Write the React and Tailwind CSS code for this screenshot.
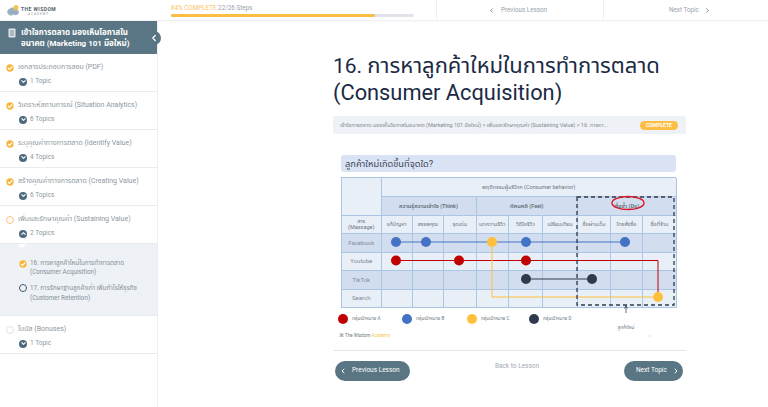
import { ChevronLeft, ChevronRight, ChevronDown, ChevronUp } from 'lucide-react';

const FONT = "font-['Roboto','Noto_Sans','Noto_Sans_Thai',sans-serif]";

const LESSONS = [
  { label: 'เอกสารประกอบการสอน (PDF)', topics: '1 Topic', status: 'done' },
  { label: 'วิเคราะห์สถานการณ์ (Situation Analytics)', topics: '6 Topics', status: 'done' },
  { label: 'ระบุคุณค่าทางการตลาด (Identify Value)', topics: '4 Topics', status: 'done' },
  { label: 'สร้างคุณค่าทางการตลาด (Creating Value)', topics: '6 Topics', status: 'done' },
  { label: 'เพิ่มและรักษาคุณค่า (Sustaining Value)', topics: '2 Topics', status: 'open', expanded: true },
  { label: 'โบนัส (Bonuses)', topics: '1 Topic', status: 'todo' }
];

const COLUMNS = ['แก้ปัญหา', 'สรรพคุณ', 'จุดเด่น', 'บทความรีวิว', 'วิดีโอรีวิว', 'เปรียบเทียบ', 'ซื้อผ่านเว็บ', 'โทรสั่งซื้อ', 'ซื้อที่ร้าน'];
const CHANNELS = ['Facebook', 'Youtube', 'TikTok', 'Search'];
const LEGEND = [
  { name: 'กลุ่มเป้าหมาย A', color: 'bg-[#c00000]', width: 'w-[64px]' },
  { name: 'กลุ่มเป้าหมาย B', color: 'bg-[#4472c4]', width: 'w-[65px]' },
  { name: 'กลุ่มเป้าหมาย C', color: 'bg-[#ffc03c]', width: 'w-[62px]' },
  { name: 'กลุ่มเป้าหมาย D', color: 'bg-[#2f3b4d]', width: 'w-[60px]' }
];

function CheckDot({ size = 8 }) {
  return (
    <svg width={size} height={size} viewBox="0 0 12 12" className="shrink-0">
      <circle cx="6" cy="6" r="5.5" fill="#f9b53a" />
      <path d="M3 6l2.2 2.2L9.4 3.8" fill="none" stroke="#fff" strokeWidth="1.8" />
    </svg>
  );
}

function StatusDot({ status }) {
  if (status === 'done') return <CheckDot />;
  if (status === 'open') return <span className="w-[8px] h-[8px] shrink-0 rounded-full border border-[#f9c777]" />;
  return <span className="w-[8px] h-[8px] shrink-0 rounded-full border border-[#dfe3e8]" />;
}

function LessonRow({ lesson }) {
  return (
    <div className="h-[38px] border-b border-[#e8ebef] pl-[6px] pt-[8px]">
      <div className="flex items-center gap-[4px] h-[11px]">
        <StatusDot status={lesson.status} />
        <span className="text-[7px] text-[#8d979f] whitespace-nowrap">{lesson.label}</span>
      </div>
      <div className="flex items-center gap-[3px] pl-[13px] mt-[3px] h-[11px]">
        <span className="w-[8px] h-[8px] rounded-full bg-[#4c6a7c] flex items-center justify-center">
          {lesson.expanded
            ? <ChevronUp size={7} color="#fff" strokeWidth={3.5} />
            : <ChevronDown size={7} color="#fff" strokeWidth={3.5} />}
        </span>
        <span className="text-[6.5px] text-[#8b98a1]">{lesson.topics}</span>
      </div>
    </div>
  );
}

function Sidebar() {
  return (
    <aside className="relative w-[158px] shrink-0 border-r border-[#eceef1] min-h-[386px]">
      <div className="relative h-[33px] bg-[#5a7583] flex items-center pl-[8px] gap-[5px]">
        <svg width="8" height="10" viewBox="0 0 8 10" className="shrink-0 -mt-[9px]">
          <rect x="0.5" y="0.5" width="7" height="9" rx="1" fill="#dfe5e8" />
          <path d="M2 3h4M2 5h4M2 7h4" stroke="#5a7583" strokeWidth="0.8" />
        </svg>
        <p className="text-[8px] leading-[11px] font-bold text-white">
          เข้าใจการตลาด มองเห็นโอกาสใน<br />อนาคต (Marketing 101 มือใหม่)
        </p>
        <span className="absolute right-[-4px] top-[10px] w-[14px] h-[14px] rounded-full bg-[#5a7583] flex items-center justify-center">
          <ChevronLeft size={10} color="#fff" strokeWidth={3} />
        </span>
      </div>
      {LESSONS.map(lesson => (
        <div key={lesson.label}>
          <LessonRow lesson={lesson} />
          {lesson.expanded && (
            <div className="relative h-[72px] bg-[#eef1f5] border-b border-[#e8ebef] pl-[19px] pt-[15px]">
              <span className="absolute left-[18px] top-0 border-x-[4px] border-x-transparent border-t-[4px] border-t-white" />
              <div className="flex gap-[3px]">
                <span className="mt-[1px]"><CheckDot size={8} /></span>
                <p className="text-[6.3px] leading-[9px] text-[#848f98]">16. การหาลูกค้าใหม่ในการทำการตลาด<br />(Consumer Acquisition)</p>
              </div>
              <div className="flex gap-[3px] mt-[6px]">
                <span className="mt-[1px] w-[8px] h-[8px] shrink-0 rounded-full border-[1.2px] border-[#3f5c70]" />
                <p className="text-[6.3px] leading-[10px] text-[#848f98]">17. การรักษาฐานลูกค้าเก่า เพิ่มกำไรให้ธุรกิจ<br />(Customer Retention)</p>
              </div>
            </div>
          )}
        </div>
      ))}
    </aside>
  );
}

function Logo() {
  return (
    <div className="w-[171px] shrink-0 flex items-center pl-[7px] gap-[1px] pt-[1px]">
      <svg width="13" height="13" viewBox="0 0 13 13">
        <path d="M0.5 9c-.8-2 .4-4 2-4 1-1.8 4-2 5.5-.6 2.2-.3 4.4 2.4 3.7 4.6-.8 2.2-3.5 2.8-5 1.6-1.6 1.8-5.3 1-6.2-1.6z" fill="#9fb2c2" />
        <circle cx="9" cy="3.5" r="2.5" fill="#f6c452" />
        <path d="M2.5 8h3M7 8.5h3" stroke="#7f94a6" strokeWidth="0.5" />
      </svg>
      <div className="leading-none pt-[1px]">
        <p className="text-[5px] leading-[6px] font-bold tracking-[0.45px] text-[#54616c] whitespace-nowrap">THE WISDOM</p>
        <p className="text-[3px] leading-[4px] tracking-[1px] text-[#8a949c] pl-[7px]">ACADEMY</p>
      </div>
    </div>
  );
}

function TopBar() {
  return (
    <header className="h-[21px] flex border-b border-[#eef0f3] shadow-[0_1px_2px_rgba(0,0,0,0.03)]">
      <Logo />
      <div className="w-[243px] shrink-0 pt-[4px]">
        <p className="text-[6.3px] leading-[8px] text-[#99a3ab] whitespace-nowrap">
          <span className="text-[#fbc35f]">84% COMPLETE</span> 22/26 Steps
        </p>
        <div className="mt-[1.5px] h-[3px] rounded-full bg-[#e1e4ea]">
          <div className="h-full w-[84%] rounded-full bg-[#fdbe44]" />
        </div>
      </div>
      <div className="w-[22px] shrink-0" />
      <button className="w-[167px] border-l border-[#eef0f3] flex items-center pl-[51px] pt-[1px] gap-[6px] text-[6.3px] text-[#98a3ab]">
        <ChevronLeft size={7} color="#52656f" strokeWidth={2.5} /> Previous Lesson
      </button>
      <button className="flex-1 border-l border-[#eef0f3] flex items-center pl-[65px] pt-[1px] gap-[5px] text-[6.3px] text-[#98a3ab]">
        Next Topic <ChevronRight size={7} color="#52656f" strokeWidth={2.5} />
      </button>
    </header>
  );
}

function HeadCell({ className = '', children }) {
  return (
    <div className={`flex items-center justify-center text-center text-[5.5px] leading-[6px] border-r border-b border-[#aac6e4] ${className}`}>
      {children}
    </div>
  );
}

function Chart() {
  return (
    <div className="ml-[8px] w-[335px]">
      <div className="h-[17px] rounded-[3px] bg-[#dae3f3] pl-[4px] text-[9.3px] leading-[17px] text-[#3a4658]">ลูกค้าใหม่เกิดขึ้นที่จุดใด?</div>
      <div className="relative mt-[5px] h-[130px]">
        <div className="grid grid-cols-[39.5px_31px_31.5px_32.5px_32.5px_34px_35px_33px_32px_34px] grid-rows-[19px_18.5px_18.5px_18.5px_18.5px_18.5px_18.5px] border-t border-l border-[#aac6e4] text-[#6b7682]">
          <HeadCell className="row-span-2 bg-[#e9eff7]" />
          <HeadCell className="col-span-9 bg-[#e9eff7]">พฤติกรรมผู้บริโภค (Consumer behavior)</HeadCell>
          <HeadCell className="col-span-3 bg-[#d2deef] font-bold">ความรู้ความเข้าใจ (Think)</HeadCell>
          <HeadCell className="col-span-3 bg-[#d2deef] font-bold">ทัศนคติ (Feel)</HeadCell>
          <HeadCell className="col-span-3 bg-[#d2deef] font-bold">ซื้อซ้ำ (Do)</HeadCell>
          <HeadCell className="bg-[#e9eff7]">สาร<br />(Massage)</HeadCell>
          {COLUMNS.map(c => <HeadCell key={c} className="bg-[#e9eff7]">{c}</HeadCell>)}
          {CHANNELS.map((channel, i) => [
            <HeadCell key={channel} className={`text-[6px] text-[#7f8a96] ${i % 2 ? 'bg-[#e9eff7]' : 'bg-[#d2deef]'}`}>{channel}</HeadCell>,
            ...COLUMNS.map(c => <HeadCell key={channel + c} className={i % 2 ? 'bg-[#e9eff7]' : 'bg-[#d2deef]'} />)
          ])}
        </div>
        {/* เส้นเชื่อมกลุ่มเป้าหมาย */}
        <svg className="absolute left-0 top-0 overflow-visible" width="335" height="155" viewBox="0 0 335 155">
          <path d="M55 65H284" stroke="#4472c4" strokeWidth="1" fill="none" />
          <path d="M55 83.5H317V120" stroke="#c00000" strokeWidth="1" fill="none" />
          <path d="M185 102H251" stroke="#2f3b4d" strokeWidth="1" fill="none" />
          <path d="M151 65V120H317" stroke="#ffc03c" strokeWidth="1" fill="none" />
          {[55, 85, 185, 284].map(x => <circle key={x} cx={x} cy="65" r="5" fill="#4472c4" />)}
          <circle cx="151" cy="65" r="5" fill="#ffc03c" />
          {[55, 118, 185].map(x => <circle key={x} cx={x} cy="83.5" r="5" fill="#c00000" />)}
          {[185, 251].map(x => <circle key={x} cx={x} cy="102" r="5" fill="#2f3b4d" />)}
          <circle cx="317" cy="120" r="5" fill="#ffc03c" />
          <rect x="236" y="20" width="97" height="108" fill="none" stroke="#2f3b4d" strokeWidth="1.3" strokeDasharray="4 3" />
          <ellipse cx="287" cy="26" rx="16" ry="6.5" fill="none" stroke="#d8182c" strokeWidth="1.4" />
          <path d="M285 129V136M283.5 131.5L285 128.5L286.5 131.5" stroke="#3c4654" strokeWidth="0.8" fill="none" />
          <text x="285" y="152" textAnchor="middle" fontSize="4.6" fill="#6d7680">ลูกค้าใหม่</text>
        </svg>
      </div>
      <div className="mt-[6px] -ml-[3px] flex items-center h-[12px]">
        {LEGEND.map(item => (
          <div key={item.name} className={`flex items-center gap-[4px] ${item.width}`}>
            <span className={`w-[10px] h-[10px] rounded-full ${item.color}`} />
            <span className="text-[4.6px] text-[#6d7680] whitespace-nowrap">{item.name}</span>
          </div>
        ))}
      </div>
      <div className="mt-[7px] -ml-[2px] flex justify-between pr-[26px] text-[4.5px] leading-[8px] text-[#6d7680]">
        <p>⌘ The Wisdom <span className="text-[#f6c452]">Academy</span></p>
        <span className="text-[#9aa2aa]">‹</span>
      </div>
    </div>
  );
}

function Content() {
  return (
    <main className="pl-[175px] w-[528px]">
      <h1 className="pt-[31px] text-[#1b2a44] whitespace-nowrap font-normal">
        <span className="block h-[27px] overflow-visible text-[22px] leading-[27px]">
          <span className="text-[21px]">16. </span>การหาลูกค้าใหม่ในการทำการตลาด
        </span>
        <span className="block h-[27px] text-[21.8px] leading-[27px]">(Consumer Acquisition)</span>
      </h1>
      <div className="mt-[10px] h-[18px] rounded-[2px] bg-[#eef1f5] flex items-center justify-between pl-[7px] pr-[8px]">
        <span className="text-[5.5px] text-[#7f8a94] whitespace-nowrap overflow-hidden">เข้าใจการตลาด มองเห็นโอกาสในอนาคต (Marketing 101 มือใหม่) &gt; เพิ่มและรักษาคุณค่า (Sustaining Value) &gt; 16. การหา...</span>
        <span className="ml-[8px] shrink-0 w-[38px] h-[9px] rounded-full bg-[#fdbe44] text-center text-[5px] leading-[9px] font-bold text-white">COMPLETE</span>
      </div>
      <div className="mt-[21px]"><Chart /></div>
      <div className="mt-[10px] border-t border-[#e6e7ee] flex justify-between pt-[10px] pl-[2px] pr-[3px]">
        <button className="w-[75px] h-[20px] rounded-full bg-[#5a7583] flex items-center pl-[4px] gap-[5px] text-[6.5px] text-white">
          <ChevronLeft size={8} color="#fff" strokeWidth={3} /> Previous Lesson
        </button>
        <a className="pt-[1px] text-[6.5px] text-[#a3a9af]">Back to Lesson</a>
        <button className="w-[59px] h-[20px] rounded-full bg-[#5a7583] flex items-center pl-[12px] gap-[5px] text-[6.5px] text-white">
          Next Topic <ChevronRight size={8} color="#fff" strokeWidth={3} />
        </button>
      </div>
    </main>
  );
}

export default function App() {
  return (
    <div className={`w-[768px] h-[407px] overflow-hidden bg-white ${FONT}`}>
      <TopBar />
      <div className="flex">
        <Sidebar />
        <Content />
      </div>
    </div>
  );
}
